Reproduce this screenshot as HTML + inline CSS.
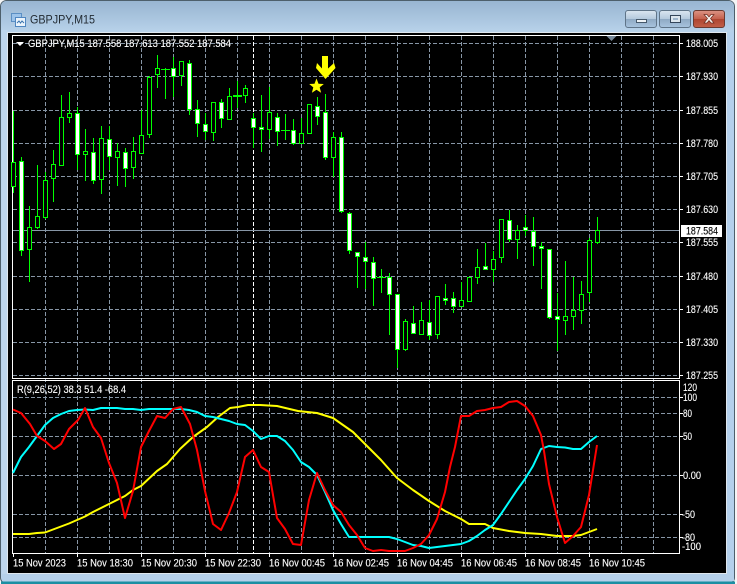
<!DOCTYPE html>
<html><head><meta charset="utf-8"><title>GBPJPY,M15</title>
<style>
html,body{margin:0;padding:0;width:737px;height:584px;overflow:hidden;background:#f4f5f6}
svg{display:block;position:absolute;left:0;top:0}
text{font-family:"Liberation Sans",sans-serif;font-size:11px;fill:#fff;stroke:#fff;stroke-width:.12}
</style></head><body>
<svg width="737" height="584" viewBox="0 0 737 584" xmlns="http://www.w3.org/2000/svg">
<defs>
<linearGradient id="fr" x1="0" y1="0" x2="0" y2="1"><stop offset="0" stop-color="#98b5d1"/><stop offset="1" stop-color="#b8d2ea"/></linearGradient>
<linearGradient id="bt" x1="0" y1="0" x2="0" y2="1"><stop offset="0" stop-color="#dbe6f0"/><stop offset=".5" stop-color="#b4c9dd"/><stop offset=".5" stop-color="#8fa9c3"/><stop offset="1" stop-color="#a8c4df"/></linearGradient>
<linearGradient id="cl" x1="0" y1="0" x2="0" y2="1"><stop offset="0" stop-color="#dc9485"/><stop offset=".5" stop-color="#c4604c"/><stop offset=".5" stop-color="#ae4530"/><stop offset="1" stop-color="#c25f48"/></linearGradient>
</defs>
<!-- window frame -->
<rect x=".5" y=".5" width="734" height="583" rx="6" fill="#b5d0ea" stroke="#4d5f6b"/>
<rect x="1" y="1" width="733" height="31" rx="5" fill="url(#fr)"/>
<rect x="1" y="581.500" width="734" height="2.500" fill="#1b8fa3"/>
<rect x="1.500" y="30" width="6" height="550" fill="#bdd5ec"/>
<rect x="7.500" y="32.500" width="719" height="541" fill="#000" stroke="#dfe7ee"/>
<rect x="727" y="33" width="7" height="548" fill="#b4d0ec"/>
<rect x="2" y="574" width="731" height="7" fill="#b5d0ea"/>
<!-- title icon -->
<rect x="11.500" y="13.500" width="10" height="8" fill="#9cc3ea" stroke="#5b8fc4"/>
<rect x="15.500" y="17.500" width="10" height="9" fill="#eaf3fb" stroke="#4f86c0"/>
<path d="M17 23l2-2 1.500 2 1.500-2 2 2" fill="none" stroke="#3973ad"/>
<text x="30" y="23.500" textLength="65" lengthAdjust="spacingAndGlyphs" style="font-size:12px;fill:#222b33;stroke:none">GBPJPY,M15</text>
<!-- buttons -->
<rect x="625.500" y="10.500" width="31" height="17" rx="2.500" fill="url(#bt)" stroke="#5f7488"/>
<rect x="636.500" y="19.500" width="10" height="3" fill="#eef3f7" stroke="#45586a"/>
<rect x="659.500" y="10.500" width="31" height="17" rx="2.500" fill="url(#bt)" stroke="#5f7488"/>
<rect x="670.500" y="15.500" width="10" height="7" fill="#dce6ee" stroke="#34465a"/><rect x="673" y="18" width="5" height="2" fill="#9db5cb"/>
<rect x="693.500" y="10.500" width="31" height="17" rx="2.500" fill="url(#cl)" stroke="#6b3a30"/>
<path d="M704 14.500l3 0 2 2.500 2-2.500 3 0-3.500 4 3.500 4.500-3 0-2-2.500-2 2.500-3 0 3.500-4.500z" fill="#f4f1ee" stroke="#6e2d20" stroke-width=".7"/>

<!-- grid -->
<g shape-rendering="crispEdges" fill="none">
<path stroke="#8796a6" stroke-dasharray="4 2" d="M45.500 36V553M77.500 36V553M109.500 36V553M141.500 36V553M173.500 36V553M205.500 36V553M237.500 36V553M269.500 36V553M301.500 36V553M333.500 36V553M365.500 36V553M397.500 36V553M429.500 36V553M461.500 36V553M493.500 36V553M525.500 36V553M557.500 36V553M589.500 36V553M621.500 36V553M653.500 36V553"/>
<path stroke="#8796a6" stroke-dasharray="4 2" d="M13 43.500H680M13 76.500H680M13 110.500H680M13 143.500H680M13 176.500H680M13 209.500H680M13 242.500H680M13 276.500H680M13 309.500H680M13 342.500H680M13 375.500H680M13 397.500H680M13 413.500H680M13 436.500H680M13 475.500H680M13 514.500H680M13 537.500H680"/>
<path stroke="#fff" stroke-dasharray="4 2" d="M253.500 36V553"/>
<path stroke="#8796a6" d="M13 230.500H680"/>
<path stroke="#fff" d="M12.500 35.500H679.500V378.500H12.500ZM12.500 380.500H679.500V553.500H12.500Z"/>
<path stroke="#fff" d="M680 43.500h3M680 76.500h3M680 110.500h3M680 143.500h3M680 176.500h3M680 209.500h3M680 242.500h3M680 276.500h3M680 309.500h3M680 342.500h3M680 375.500h3M680 397.500h3M680 413.500h3M680 436.500h3M680 475.500h3M680 514.500h3M680 537.500h3M13.500 553v4M77.500 553v4M141.500 553v4M205.500 553v4M269.500 553v4M333.500 553v4M397.500 553v4M461.500 553v4M525.500 553v4M589.500 553v4"/>
</g>
<path d="M606.500 36h10l-5 5z" fill="#778899"/>

<!-- candles -->
<g shape-rendering="crispEdges">
<path fill="none" stroke="#00ff00" d="M13.500 111V193M21.500 157V256M29.500 206V282M37.500 165V229M45.500 172V219M53.500 150V202M61.500 95V166M69.500 92V123M77.500 107V170M85.500 129V181M93.500 138V184M101.500 126V194M109.500 126V170M117.500 143V186M125.500 148V187M133.500 137V179M141.500 110V153M149.500 76V138M157.500 55V88M165.500 68V99M173.500 57V97M181.500 61V86M189.500 60V115M197.500 100V137M205.500 113V140M213.500 102V141M221.500 99V128M229.500 88V120M237.500 81V108M245.500 85V103M253.500 113V148M261.500 95V152M269.500 87V139M277.500 113V146M285.500 114V140M293.500 119V145M301.500 118V143M309.500 104V133M317.500 97V125M325.500 94V160M333.500 132V177M341.500 132V213M349.500 212V254M357.500 252V288M365.500 242V289M373.500 257V306M381.500 269V293M389.500 273V335M397.500 294V368M405.500 319V351M413.500 306V334M421.500 302V335M429.500 300V340M437.500 296V339M445.500 284V305M453.500 292V313M461.500 282V307M469.500 277V301M477.500 249V284M485.500 243V270M493.500 251V282M501.500 219V263M509.500 210V242M517.500 225V259M525.500 215V236M533.500 217V266M541.500 242V289M549.500 249V319M557.500 293V351M565.500 261V335M573.500 277V330M581.500 281V324M589.500 238V302M597.500 217V244M161 69.500h9M281 130.500h9M377 277.500h9M233 96.500h9M233 95.500h9"/>
<path fill="#000" stroke="#00ff00" d="M11.500 162.500h4v24h-4zM27.500 227.500h4v22h-4zM35.500 216.500h4v11h-4zM43.500 180.500h4v37h-4zM51.500 164.500h4v14h-4zM59.500 117.500h4v48h-4zM67.500 113.500h4v4h-4zM83.500 151.500h4v3h-4zM99.500 138.500h4v41h-4zM115.500 151.500h4v6h-4zM131.500 151.500h4v16h-4zM139.500 135.500h4v18h-4zM147.500 77.500h4v57h-4zM155.500 68.500h4v6h-4zM179.500 61.500h4v14h-4zM211.500 102.500h4v30h-4zM227.500 96.500h4v23h-4zM243.500 88.500h4v7h-4zM267.500 112.500h4v17h-4zM299.500 133.500h4v10h-4zM307.500 104.500h4v29h-4zM331.500 137.500h4v20h-4zM403.500 321.500h4v28h-4zM419.500 320.500h4v14h-4zM435.500 296.500h4v38h-4zM459.500 300.500h4v6h-4zM467.500 277.500h4v24h-4zM475.500 267.500h4v10h-4zM491.500 259.500h4v10h-4zM499.500 219.500h4v38h-4zM515.500 230.500h4v9h-4zM563.500 316.500h4v4h-4zM571.500 310.500h4v6h-4zM579.500 294.500h4v16h-4zM587.500 240.500h4v52h-4zM595.500 230.500h4v12h-4z"/>
<path fill="#fff" stroke="#00ff00" d="M19.500 161.500h4v89h-4zM75.500 113.500h4v41h-4zM91.500 152.500h4v28h-4zM107.500 139.500h4v17h-4zM123.500 152.500h4v16h-4zM171.500 68.500h4v8h-4zM187.500 63.500h4v46h-4zM195.500 109.500h4v14h-4zM203.500 124.500h4v7h-4zM219.500 102.500h4v16h-4zM251.500 118.500h4v9h-4zM259.500 127.500h4v2h-4zM275.500 117.500h4v14h-4zM291.500 130.500h4v13h-4zM315.500 106.500h4v10h-4zM323.500 112.500h4v45h-4zM339.500 137.500h4v74h-4zM347.500 213.500h4v37h-4zM355.500 252.500h4v4h-4zM363.500 257.500h4v4h-4zM371.500 262.500h4v16h-4zM387.500 277.500h4v17h-4zM395.500 294.500h4v55h-4zM411.500 323.500h4v10h-4zM427.500 322.500h4v13h-4zM443.500 298.500h4v2h-4zM451.500 298.500h4v8h-4zM483.500 266.500h4v3h-4zM507.500 220.500h4v19h-4zM523.500 227.500h4v3h-4zM531.500 231.500h4v15h-4zM539.500 246.500h4v2h-4zM547.500 249.500h4v68h-4zM555.500 316.500h4v3h-4z"/>
</g>

<!-- arrow + star -->
<path d="M322 56h6v12.500l6-5.500 1.500 5-10 11-9.500-11 1-5 5 5.500z" fill="#ffff00"/>
<path d="M316.500 78.500l2 5.200 5.300.3-4.100 3.400 1.400 5.400-4.600-3-4.600 3 1.400-5.400-4.100-3.400 5.300-.3z" fill="#ffff00"/>

<!-- indicator lines -->
<g fill="none" stroke-width="2" stroke-linejoin="round">
<path stroke="#ffff00" d="M13 534L29 534 37 533 45 532.500 53 529.500 61 526.500 69 523.500 77 520 85 516.500 93 512 101 508 109 504 117 500 125 496 133 490 141 486 157 471 167 464 180 449 193 437 207 427 218 417 230 408 238 407 248 405 260 405 277 406 298 411 317 413 333 418 353 432 367 446 381 460 397 478 413 490 429 501 445 511 461 519 469 524 485 524 493 528 509 531 525 533 541 534 557 536 573 536 581 535 597 529"/>
<path stroke="#00ffff" d="M13 473L21 457 29 447 37 436 45 425 53 418 61 414 69 411 77 410 85 409.500 93 410 101 408 117 408 125 409 133 409 141 410 149 409 181 409 189 410 197 412 205 416 213 417 221 419 229 421 237 424 245 425 253 431 261 439 269 436 277 436 285 441 293 450 301 462 309 467 317 475 325 492 333 510 341 524 349 537 389 537 397 539 405 542 413 545 421 546 429 548 437 547 445 546 453 545 461 544 469 541 477 536 485 530 493 525 501 514 509 502 517 490 525 479 533 466 541 449 549 446 557 447 565 447.500 573 449 581 449 589 442 597 436"/>
<path stroke="#ff0000" d="M13 409.500L21 413 30 424 37 436 45 441 54 449 61 444 69 429 78 420 85 408 93 427 101 438 109 463 117 483 125 518 133 491 141 447 149 431 157 416 165 418 173 409 181 407 190 424 197 450 205 491 213 524 221 530 229 513 237 492 245 457 253 450 261 467 269 472 277 518 285 529 293 544 301 545 309 500 317 473 325 490 333 505 341 512 349 525 357 535 365 548 373 551 381 550 389 551 405 551 413 548 421 544 429 535 437 519 445 492 450 467 455 447 461 416 469 416 477 411 485 410 493 408 501 407 509 402 517 401 525 406 533 416 541 435 544 451 549 484 557 517 565 543 573 536 581 527 589 495 597 445"/>
</g>

<!-- legend -->
<path d="M16 42h8l-4 4z" fill="#fff"/>
<text x="28" y="47" textLength="203" lengthAdjust="spacingAndGlyphs">GBPJPY,M15  187.558 187.613 187.552 187.584</text>
<text x="17" y="393" textLength="109" lengthAdjust="spacingAndGlyphs">R(9,26,52) 38.3 51.4 -68.4</text>

<!-- price axis -->
<g>
<text x="686" y="47" textLength="32" lengthAdjust="spacingAndGlyphs">188.005</text>
<text x="686" y="80" textLength="32" lengthAdjust="spacingAndGlyphs">187.930</text>
<text x="686" y="114" textLength="32" lengthAdjust="spacingAndGlyphs">187.855</text>
<text x="686" y="147" textLength="32" lengthAdjust="spacingAndGlyphs">187.780</text>
<text x="686" y="180" textLength="32" lengthAdjust="spacingAndGlyphs">187.705</text>
<text x="686" y="213" textLength="32" lengthAdjust="spacingAndGlyphs">187.630</text>
<text x="686" y="246" textLength="32" lengthAdjust="spacingAndGlyphs">187.555</text>
<text x="686" y="280" textLength="32" lengthAdjust="spacingAndGlyphs">187.480</text>
<text x="686" y="313" textLength="32" lengthAdjust="spacingAndGlyphs">187.405</text>
<text x="686" y="346" textLength="32" lengthAdjust="spacingAndGlyphs">187.330</text>
<text x="686" y="379" textLength="32" lengthAdjust="spacingAndGlyphs">187.255</text>
<rect x="681" y="225" width="41" height="12" fill="#fff"/>
<text x="686" y="234.500" textLength="32" lengthAdjust="spacingAndGlyphs" style="fill:#000;stroke:#000">187.584</text>
<text x="683" y="391" textLength="14" lengthAdjust="spacingAndGlyphs">120</text>
<text x="683" y="401" textLength="14" lengthAdjust="spacingAndGlyphs">100</text>
<text x="683" y="417" textLength="9" lengthAdjust="spacingAndGlyphs">80</text>
<text x="683" y="440" textLength="9" lengthAdjust="spacingAndGlyphs">50</text>
<text x="683" y="479" textLength="18" lengthAdjust="spacingAndGlyphs">0.00</text>
<text x="682" y="518" textLength="13" lengthAdjust="spacingAndGlyphs">-50</text>
<text x="682" y="541" textLength="13" lengthAdjust="spacingAndGlyphs">-80</text>
<text x="682" y="550" textLength="19" lengthAdjust="spacingAndGlyphs">-100</text>
</g>
<!-- time axis -->
<g>
<text x="13" y="566.500" textLength="53" lengthAdjust="spacingAndGlyphs">15 Nov 2023</text>
<text x="77" y="566.500" textLength="56" lengthAdjust="spacingAndGlyphs">15 Nov 18:30</text>
<text x="141" y="566.500" textLength="56" lengthAdjust="spacingAndGlyphs">15 Nov 20:30</text>
<text x="205" y="566.500" textLength="56" lengthAdjust="spacingAndGlyphs">15 Nov 22:30</text>
<text x="269" y="566.500" textLength="56" lengthAdjust="spacingAndGlyphs">16 Nov 00:45</text>
<text x="333" y="566.500" textLength="56" lengthAdjust="spacingAndGlyphs">16 Nov 02:45</text>
<text x="397" y="566.500" textLength="56" lengthAdjust="spacingAndGlyphs">16 Nov 04:45</text>
<text x="461" y="566.500" textLength="56" lengthAdjust="spacingAndGlyphs">16 Nov 06:45</text>
<text x="525" y="566.500" textLength="56" lengthAdjust="spacingAndGlyphs">16 Nov 08:45</text>
<text x="589" y="566.500" textLength="56" lengthAdjust="spacingAndGlyphs">16 Nov 10:45</text>
</g>
</svg>
</body></html>
